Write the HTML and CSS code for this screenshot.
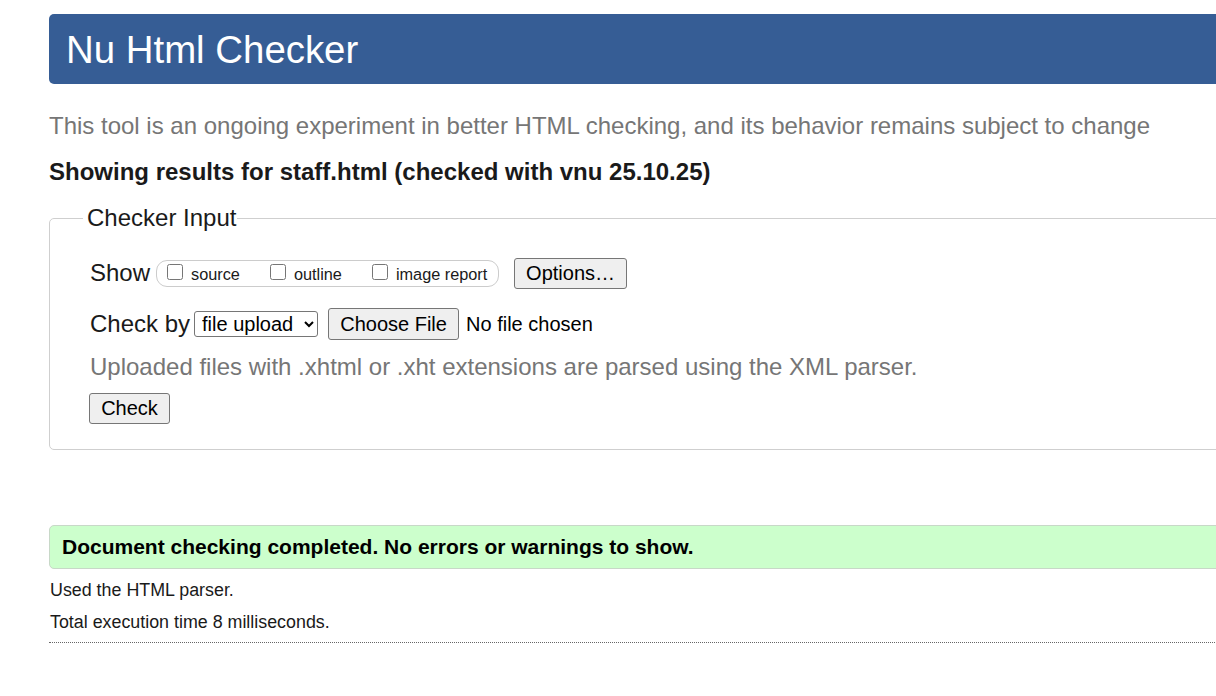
FILE: index.html
```html
<!DOCTYPE html>
<html lang="en">
<head>
<meta charset="utf-8">
<title>Showing results for staff.html - Nu Html Checker</title>
<link rel="stylesheet" href="styles.css">
</head>
<body>
<div class="page">
  <header class="banner"><h1 class="title">Nu Html Checker</h1></header>
  <p class="tagline">This tool is an ongoing experiment in better HTML checking, and its behavior remains subject to change</p>
  <h2 class="results-heading">Showing results for staff.html (checked with vnu 25.10.25)</h2>
  <form class="checker-form">
    <fieldset class="checker">
      <legend class="checker-legend">Checker Input</legend>
      <div class="row row-show">
        <span class="row-label">Show</span>
        <span class="show-box">
          <label class="opt"><input type="checkbox" class="cb"><span>source</span></label>
          <label class="opt"><input type="checkbox" class="cb"><span>outline</span></label>
          <label class="opt"><input type="checkbox" class="cb"><span>image report</span></label>
        </span>
        <button type="button" class="btn btn-options">Options…</button>
      </div>
      <div class="row row-checkby">
        <span class="row-label">Check by</span>
        <select class="sel"><option>file upload</option></select>
        <button type="button" class="btn btn-file">Choose File</button>
        <span class="nofile">No file chosen</span>
      </div>
      <p class="hint">Uploaded files with .xhtml or .xht extensions are parsed using the XML parser.</p>
      <div class="row row-submit">
        <button type="button" class="btn btn-check">Check</button>
      </div>
    </fieldset>
  </form>
  <p class="success">Document checking completed. No errors or warnings to show.</p>
  <p class="detail">Used the HTML parser.</p>
  <p class="detail">Total execution time 8 milliseconds.</p>
  <hr class="rule">
</div>
</body>
</html>
```
FILE: styles.css
```css
html, body {
  margin: 0;
  padding: 0;
  overflow: hidden;
  background: #fff;
}
body {
  font-family: "Liberation Sans", Arial, sans-serif;
  color: #111;
}
.page {
  width: 1300px;
  padding: 14px 0 0 49px;
}
.banner {
  height: 70px;
  background: #365d95;
  border-radius: 5px;
  display: flex;
  align-items: center;
  padding-left: 17px;
}
.title {
  margin: 2px 0 0;
  font-size: 38.4px;
  font-weight: normal;
  color: #fff;
  line-height: 44px;
}
.tagline {
  margin: 28px 0 0;
  font-size: 24px;
  line-height: 28px;
  color: #767676;
}
.results-heading {
  margin: 18px 0 0;
  font-size: 24px;
  line-height: 28px;
  font-weight: bold;
  color: #1a1a1a;
}
.checker-form {
  margin: 18px 0 0;
}
.checker {
  margin: 0;
  border: 1px solid #cfcfcf;
  border-radius: 5px;
  padding: 25px 0 25px 39px;
  min-width: 0;
}
.checker-legend {
  margin-left: -6px;
  padding: 0 1px 0 4px;
  font-size: 24px;
  line-height: 28px;
  color: #1a1a1a;
}
.row {
  display: flex;
  align-items: center;
  height: 32px;
}
.row-label {
  font-size: 24px;
  color: #1a1a1a;
  margin-left: 1px;
}
.show-box {
  display: flex;
  align-items: center;
  height: 25px;
  margin-left: 6px;
  padding: 0 8px 0 10px;
  border: 1px solid #cccccc;
  border-radius: 11px;
  width: 323px;
}
.opt {
  display: flex;
  align-items: center;
  font-size: 16.3px;
  color: #1a1a1a;
  margin-right: 30px;
}
.opt span {
  margin-top: 3px;
}
.opt:last-child {
  margin-right: 0;
}
.cb {
  width: 16px;
  height: 16px;
  margin: 0 8px 2px 0;
}
.btn {
  font-family: "Liberation Sans", Arial, sans-serif;
  font-size: 20px;
  color: #000;
  background: #efefef;
  border: 1px solid #767676;
  border-radius: 3px;
  padding: 0;
  white-space: nowrap;
}
.btn-options {
  margin-left: 15px;
  height: 31px;
  width: 113px;
}
.row-checkby {
  margin-top: 19px;
}
.sel {
  margin-left: 4px;
  font-family: "Liberation Sans", Arial, sans-serif;
  font-size: 20px;
  height: 26px;
  width: 124px;
  border: 1px solid #767676;
  border-radius: 3px;
  padding: 0 0 0 3px;
  background: #fff;
  color: #000;
}
.btn-file {
  margin-left: 10px;
  height: 32px;
  width: 131px;
}
.nofile {
  margin-left: 7px;
  font-size: 20px;
  color: #000;
}
.hint {
  margin: 13px 0 0 1px;
  font-size: 24px;
  line-height: 28px;
  color: #767676;
}
.row-submit {
  margin-top: 12px;
  height: 31px;
}
.btn-check {
  height: 31px;
  width: 81px;
}
.success {
  margin: 75px 0 0;
  height: 42px;
  display: flex;
  align-items: center;
  padding-left: 12px;
  background: #ccffcc;
  border: 1px solid #c8d8c8;
  border-radius: 5px;
  font-size: 21px;
  font-weight: bold;
  color: #000;
}
.detail {
  margin: 11px 0 0 1px;
  font-size: 17.85px;
  line-height: 20px;
  color: #1a1a1a;
}
.detail + .detail {
  margin-top: 12px;
}
.rule {
  margin: 10px 0 0;
  border: 0;
  border-top: 1px dotted #666;
  height: 0;
}
```
